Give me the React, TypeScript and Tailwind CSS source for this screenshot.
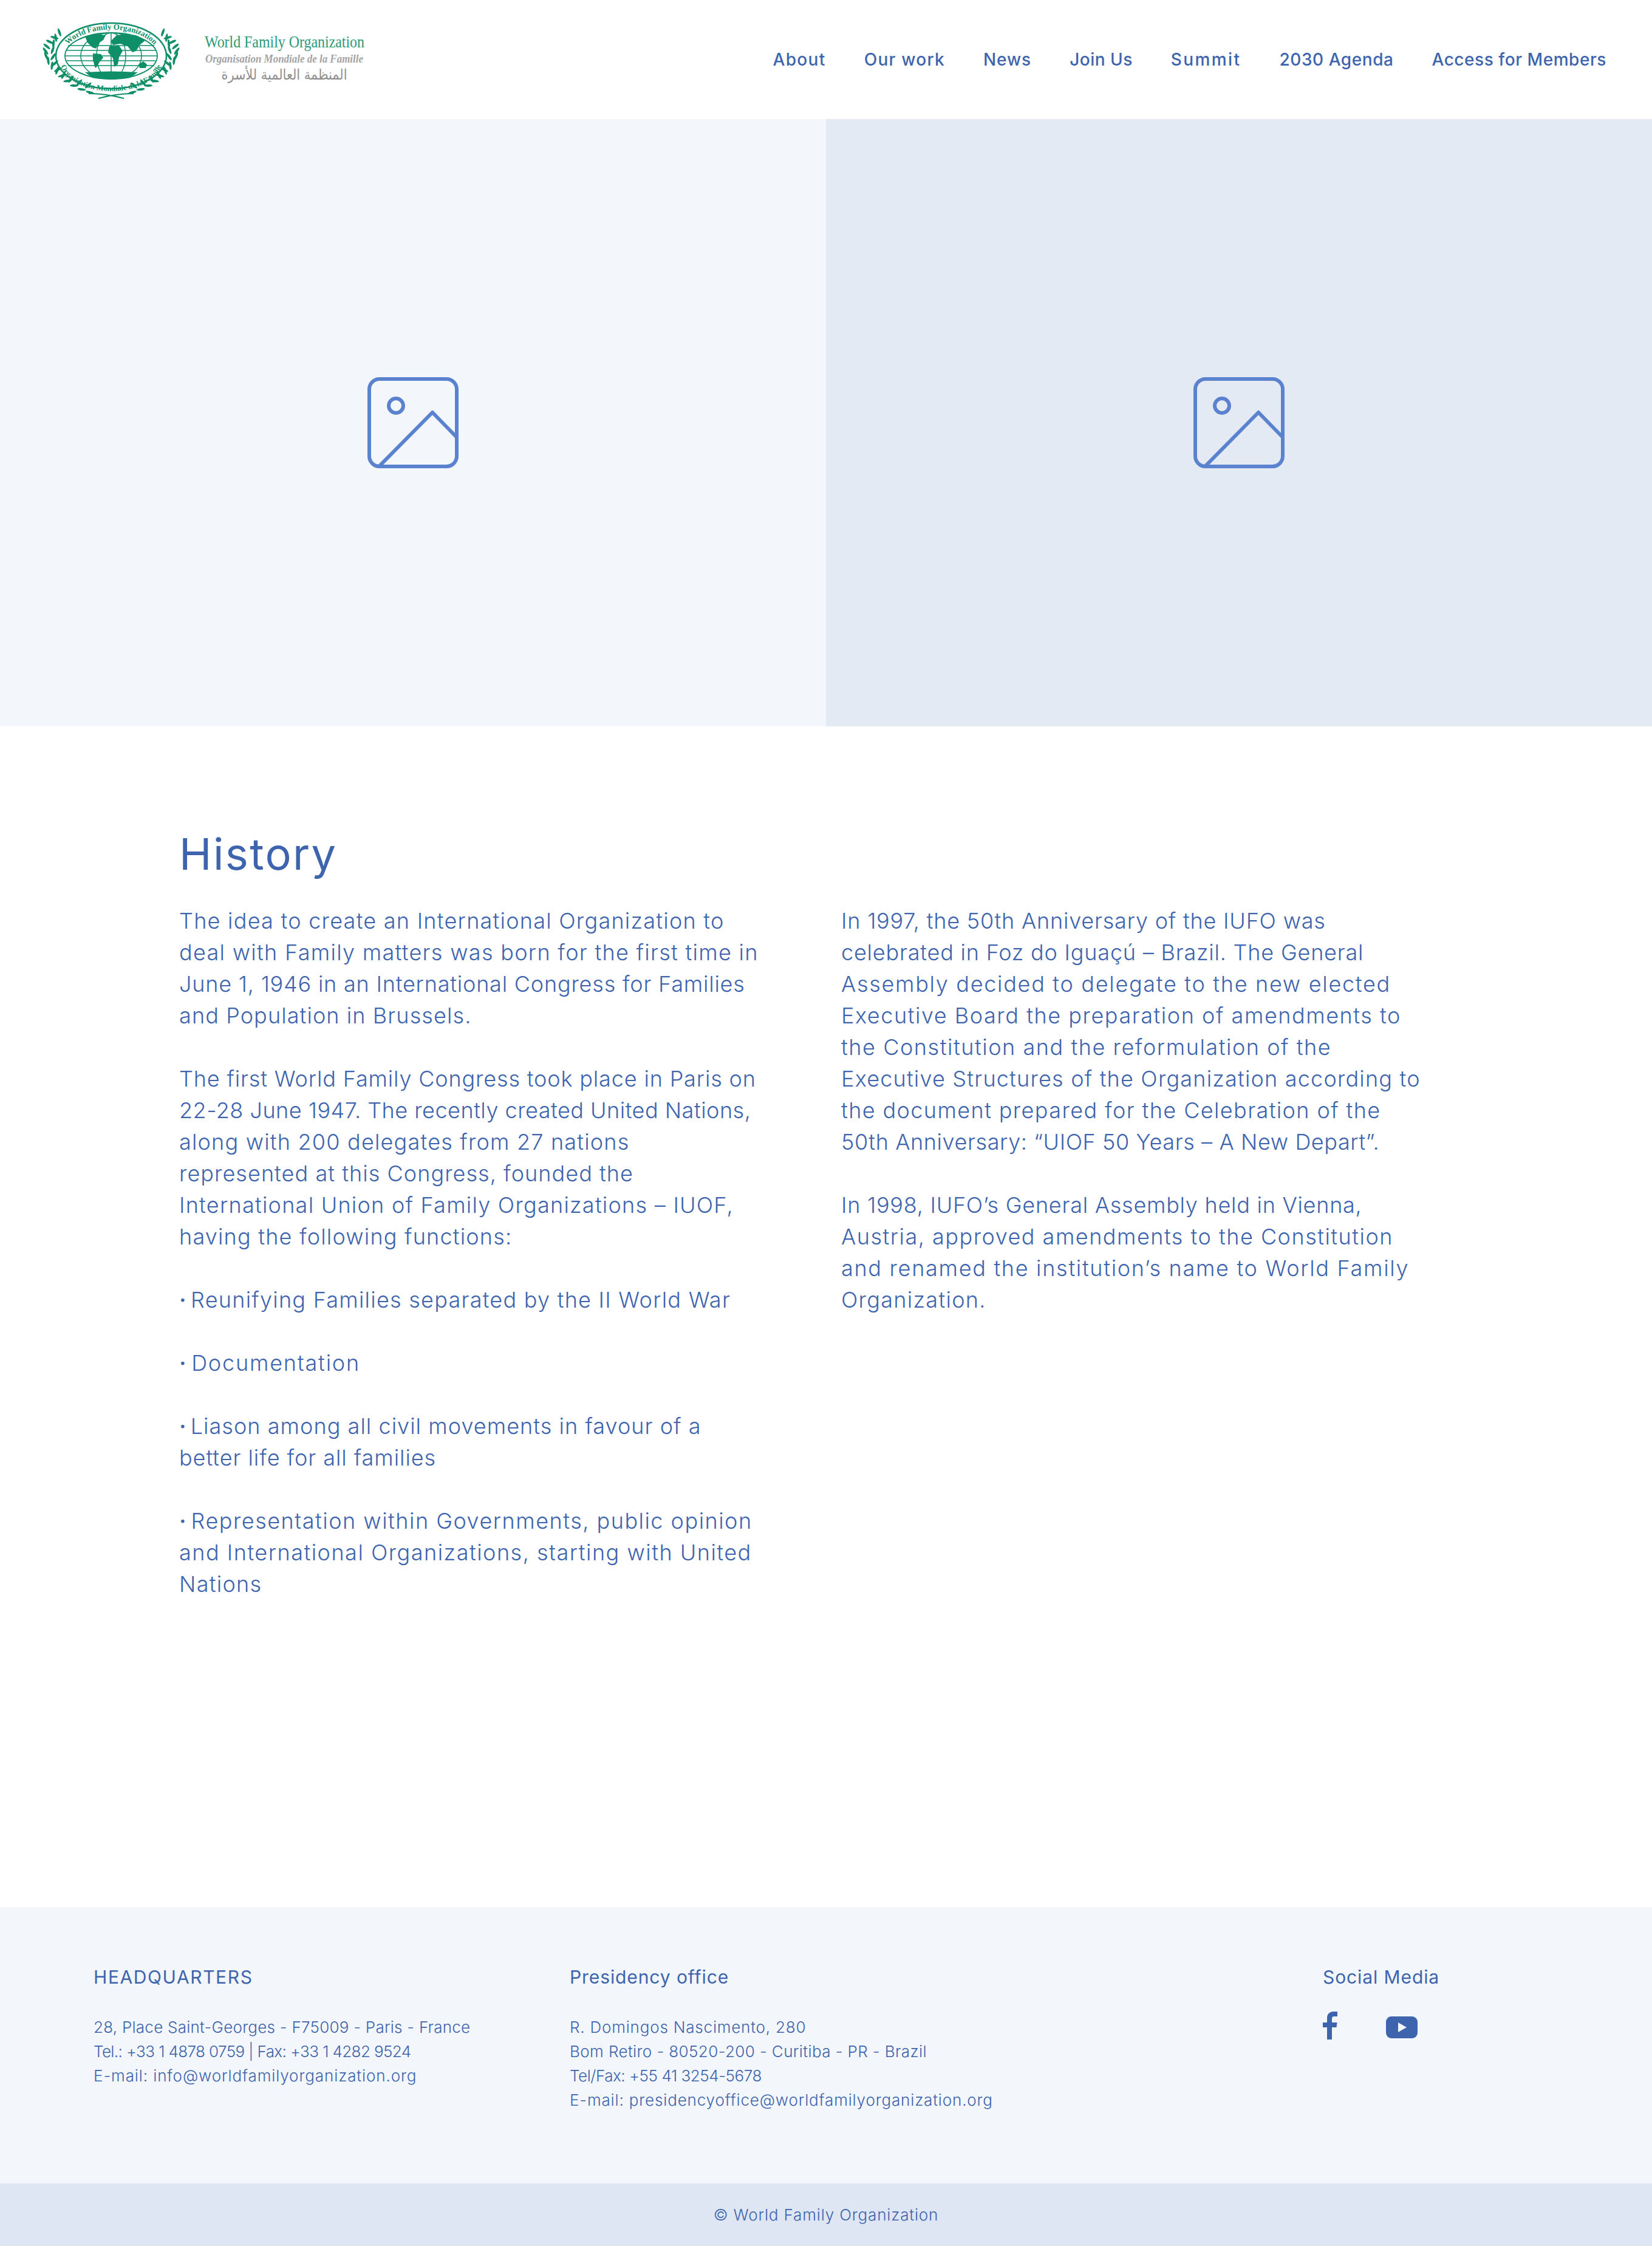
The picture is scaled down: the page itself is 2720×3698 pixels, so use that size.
const navItems = [
  ['About', 'tracking-[1.35px]'],
  ['Our work', 'tracking-[1.25px]'],
  ['News', 'tracking-[0.95px]'],
  ['Join Us', 'tracking-[0.5px]'],
  ['Summit', 'tracking-[2.4px]'],
  ['2030 Agenda', 'tracking-[0.55px]'],
  ['Access for Members', 'tracking-[0.55px]'],
];

// Inter is narrower than the original face, so each line carries its own tracking
type Line = [string, string];

const leftColumn: Line[][] = [
  [
    ['The idea to create an International Organization to', 'tracking-[1.25px]'],
    ['deal with Family matters was born for the first time in', 'tracking-[1.3px]'],
    ['June 1, 1946 in an International Congress for Families', 'tracking-[0.8px]'],
    ['and Population in Brussels.', 'tracking-[1.1px]'],
  ],
  [
    ['The first World Family Congress took place in Paris on', 'tracking-[0.85px]'],
    ['22-28 June 1947. The recently created United Nations,', 'tracking-[0.5px]'],
    ['along with 200 delegates from 27 nations', 'tracking-[1.2px]'],
    ['represented at this Congress, founded the', 'tracking-[1.05px]'],
    ['International Union of Family Organizations – IUOF,', 'tracking-[1.25px]'],
    ['having the following functions:', 'tracking-[1.2px]'],
  ],
  [['· Reunifying Families separated by the II World War', 'tracking-[1.25px]']],
  [['· Documentation', 'tracking-[1.8px]']],
  [
    ['· Liason among all civil movements in favour of a', 'tracking-[1.05px]'],
    ['better life for all families', 'tracking-[0.95px]'],
  ],
  [
    ['· Representation within Governments, public opinion', 'tracking-[1.5px]'],
    ['and International Organizations, starting with United', 'tracking-[1.5px]'],
    ['Nations', 'tracking-[1.3px]'],
  ],
];

const rightColumn: Line[][] = [
  [
    ['In 1997, the 50th Anniversary of the IUFO was', 'tracking-[0.8px]'],
    ['celebrated in Foz do Iguaçú – Brazil. The General', 'tracking-[0.8px]'],
    ['Assembly decided to delegate to the new elected', 'tracking-[1.7px]'],
    ['Executive Board the preparation of amendments to', 'tracking-[1.55px]'],
    ['the Constitution and the reformulation of the', 'tracking-[1.55px]'],
    ['Executive Structures of the Organization according to', 'tracking-[1.2px]'],
    ['the document prepared for the Celebration of the', 'tracking-[1.4px]'],
    ['50th Anniversary: “UIOF 50 Years – A New Depart”.', 'tracking-[0.6px]'],
  ],
  [
    ['In 1998, IUFO’s General Assembly held in Vienna,', 'tracking-[0.75px]'],
    ['Austria, approved amendments to the Constitution', 'tracking-[1.5px]'],
    ['and renamed the institution’s name to World Family', 'tracking-[1.7px]'],
    ['Organization.', 'tracking-[1.3px]'],
  ],
];

const green = '#0f8f68';
const wreathNodes = Array.from({ length: 12 }, (_, i) => 148 + i * 9);

function WreathSide() {
  return (
    <g fill={green}>
      {wreathNodes.map((deg) => {
        const t = (deg * Math.PI) / 180;
        const x = 109 + 102 * Math.cos(t);
        const y = 64 - 60 * Math.sin(t);
        // direction of the stem, pointing up towards the tip
        const dir = (Math.atan2(-60 * Math.cos(t), 102 * Math.sin(t)) * 180) / Math.PI;
        return (
          <g key={deg} transform={`translate(${x} ${y}) rotate(${dir + 180})`}>
            <ellipse cx="6" cy="-3.5" rx="7" ry="2" transform="rotate(-28)" />
            <ellipse cx="6" cy="3.5" rx="7" ry="2" transform="rotate(28)" />
          </g>
        );
      })}
    </g>
  );
}

function Logo() {
  return (
    <svg width="540" height="140" viewBox="0 0 540 140" className="block overflow-visible">
      <defs>
        <path id="logo-top" d="M 36 49 A 78 44 0 0 1 182 49" />
        <path id="logo-bottom" d="M 25 72 A 84 50 0 0 0 193 72" />
      </defs>
      <WreathSide />
      <g transform="translate(218 0) scale(-1 1)">
        <WreathSide />
      </g>
      <path d="M 72 126 Q 100 126 130 134 M 146 126 Q 118 126 88 134" stroke={green} strokeWidth="2" fill="none" />
      {/* rings */}
      <ellipse cx="109" cy="64" rx="91" ry="54" fill="none" stroke={green} strokeWidth="2.5" />
      <ellipse cx="109" cy="64" rx="76" ry="38" fill="none" stroke={green} strokeWidth="1.8" />
      {/* globe grid */}
      <g stroke={green} strokeWidth="1.5" fill="none">
        <ellipse cx="109" cy="64" rx="24" ry="38" />
        <ellipse cx="109" cy="64" rx="50" ry="38" />
        <path d="M109 26 V102 M33 64 H185 M38 47 H180 M36 55 H182 M36 72 H182 M38 80 H180" />
      </g>
      {/* continents */}
      <g fill={green}>
        <path d="M 66 32 L 84 28 L 100 30 L 96 38 L 90 42 L 84 52 L 78 50 L 70 42 Z" />
        <path d="M 79 60 L 92 61 L 96 67 L 90 74 L 84 84 L 82 82 L 79 70 Z" />
        <path d="M 106 48 L 122 47 L 128 56 L 122 66 L 120 78 L 114 82 L 112 68 L 104 58 Z" />
        <path d="M 108 40 L 118 30 L 134 28 L 150 30 L 166 38 L 156 46 L 150 56 L 144 58 L 136 48 L 124 44 L 112 46 Z" />
        <path d="M 154 78 L 162 73 L 168 78 L 166 84 L 156 84 Z" />
        <path d="M 66 91 Q 109 88 153 91 L 140 100 Q 109 105 78 100 Z" />
      </g>
      {/* ring lettering */}
      <text className="text-[13px] font-bold [font-family:'Liberation_Serif',serif]" fill={green}>
        <textPath href="#logo-top" startOffset="50%" textAnchor="middle">
          World Family Organization
        </textPath>
      </text>
      <text className="text-[12.5px] font-bold [font-family:'Liberation_Serif',serif]" fill={green}>
        <textPath href="#logo-bottom" startOffset="50%" textAnchor="middle">
          Organisation Mondiale de la Famille
        </textPath>
      </text>
      {/* wordmark */}
      <text x="263" y="50" textLength="263" lengthAdjust="spacingAndGlyphs" className="text-[28px] [font-family:'Liberation_Serif',serif]" fill="#2b9a78">
        World Family Organization
      </text>
      <text x="264" y="75" textLength="260" lengthAdjust="spacingAndGlyphs" className="text-[18px] font-bold italic [font-family:'Liberation_Serif',serif]" fill="#a3a3a3">
        Organisation Mondiale de la Famille
      </text>
      <text x="394" y="103" textAnchor="middle" textLength="207" lengthAdjust="spacingAndGlyphs" className="text-[24px] [font-family:'DejaVu_Sans',sans-serif]" fill="#8f8f8f">
        المنظمة العالمية للأسرة
      </text>
    </svg>
  );
}

function ImagePlaceholder() {
  return (
    <svg width="150" height="150" viewBox="0 0 150 150" fill="none" stroke="#5b82cf" strokeWidth="6" strokeLinejoin="round" strokeLinecap="round">
      <rect x="3" y="3" width="144" height="144" rx="17" />
      <circle cx="47" cy="47" r="12" />
      <path d="M20 146 L107 58 L147 99" />
    </svg>
  );
}

function TextLine({ text, tracking }: { text: string; tracking: string }) {
  const bullet = text.startsWith('· ');
  return (
    <span className={`block whitespace-nowrap ${tracking}`}>
      {bullet && <span className="mr-[-4px] font-semibold">· </span>}
      {bullet ? text.slice(2) : text}
    </span>
  );
}

function TextColumn({ paragraphs }: { paragraphs: Line[][] }) {
  return (
    <div className="flex flex-col gap-[52px]">
      {paragraphs.map((lines, i) => (
        <p key={i}>
          {lines.map(([line, tracking]) => (
            <TextLine key={line} text={line} tracking={tracking} />
          ))}
        </p>
      ))}
    </div>
  );
}

export default function App() {
  return (
    <div className="min-h-[3698px] bg-white text-[#3d64ad] [font-family:Inter,sans-serif]">
      <header className="flex h-[196px] items-center justify-between pl-[74px] pr-[75px]">
        <Logo />
        <nav className="flex items-center gap-[63px] text-[28px] font-[450]">
          {navItems.map(([item, tracking]) => (
            <a key={item} href="#" className={`whitespace-nowrap ${tracking}`}>
              {item}
            </a>
          ))}
        </nav>
      </header>

      <section className="grid h-[1000px] grid-cols-2">
        <div className="flex items-center justify-center bg-[#f3f6fb]">
          <ImagePlaceholder />
        </div>
        <div className="flex items-center justify-center bg-[#e4eaf4]">
          <ImagePlaceholder />
        </div>
      </section>

      <main className="h-[1944px] pl-[295px] pt-[168px]">
        <h1 className="text-[72px] leading-[84px] tracking-[2.4px]">History</h1>
        <div className="mt-[42px] grid grid-cols-[1000px_1000px] gap-[90px] text-[36px] font-[280] leading-[52px]">
          <TextColumn paragraphs={leftColumn} />
          <TextColumn paragraphs={rightColumn} />
        </div>
      </main>

      <footer className="h-[455px] bg-[#f3f6fb] pt-[97px]">
        <div className="grid grid-cols-[784px_1240px_auto] pl-[154px]">
          <div>
            <h2 className="text-[30px] leading-[36px] tracking-[1.6px]">HEADQUARTERS</h2>
            <div className="mt-[45px] text-[26px] font-[270] leading-[40px]">
              <p className="tracking-[0.25px]">28, Place Saint-Georges - F75009 - Paris - France</p>
              <p className="tracking-[-0.6px]">Tel.: +33 1 4878 0759 | Fax: +33 1 4282 9524</p>
              <p className="tracking-[0.9px]">E-mail: info@worldfamilyorganization.org</p>
            </div>
          </div>
          <div>
            <h2 className="text-[30px] leading-[36px] tracking-[0.9px]">Presidency office</h2>
            <div className="mt-[45px] text-[26px] font-[270] leading-[40px]">
              <p className="tracking-[0.8px]">R. Domingos Nascimento, 280</p>
              <p className="tracking-[0.4px]">Bom Retiro - 80520-200 - Curitiba - PR - Brazil</p>
              <p className="tracking-[-0.45px]">Tel/Fax: +55 41 3254-5678</p>
              <p className="tracking-[0.85px]">E-mail: presidencyoffice@worldfamilyorganization.org</p>
            </div>
          </div>
          <div>
            <h2 className="text-[30px] leading-[36px] tracking-[0.9px]">Social Media</h2>
            <div className="mt-[39px] flex items-start gap-[80px]">
              <svg width="24" height="46" viewBox="0 0 24 46" fill="#3d64ad">
                <path d="M7 46 V26 H0 V18 H7 V11 C7 4 11 0 18 0 H24 V8 H19 C16 8 15 9 15 12 V18 H23.5 L22.5 26 H15 V46 Z" />
              </svg>
              <svg width="52" height="36" viewBox="0 0 52 36" className="mt-[8px]">
                <rect width="52" height="36" rx="9" fill="#3d64ad" />
                <path d="M20 10 L34 18 L20 26 Z" fill="#f3f6fb" />
              </svg>
            </div>
          </div>
        </div>
      </footer>

      <div className="flex h-[103px] items-center justify-center bg-[#dfe6f3] text-[26px] font-[270] tracking-[0.85px]">
        © World Family Organization
      </div>
    </div>
  );
}
